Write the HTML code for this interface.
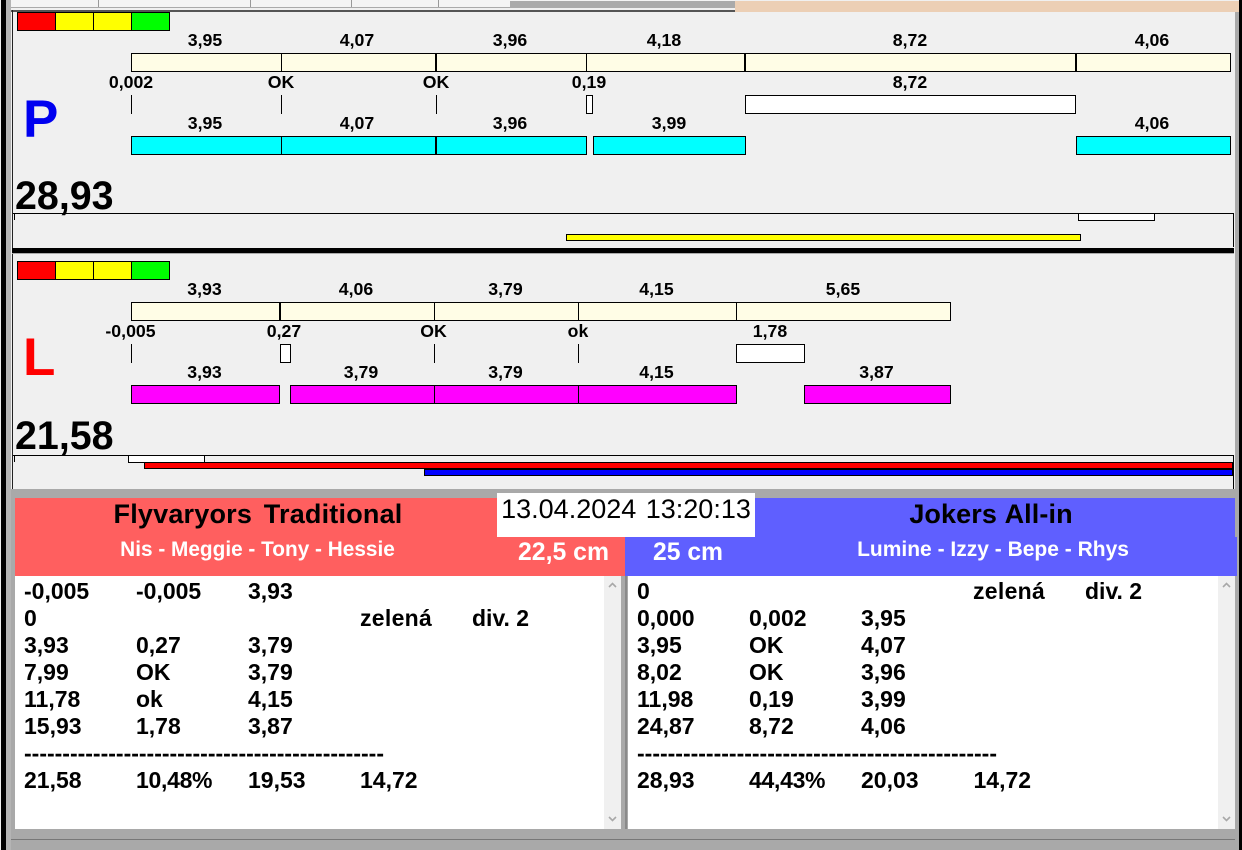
<!DOCTYPE html>
<html><head><meta charset="utf-8"><style>
html,body{margin:0;padding:0;background:#f0f0f0}
body{position:relative;width:1242px;height:850px;overflow:hidden;font-family:"Liberation Sans",sans-serif;color:#000}
div,span{position:absolute;box-sizing:border-box}
.r{border:1.5px solid #000}
.v{background:#000;width:1px}
.l{width:100px;height:20px;line-height:20px;text-align:center;font-weight:bold;font-size:17.7px;white-space:nowrap}
.t{font-weight:bold;font-size:23px;line-height:26px;height:26px;white-space:nowrap}
.cy{background:#0ff}.mg{background:#f0f}.ye{background:#fffde6}.w{background:#fff}
</style></head><body>
<!-- frame -->
<div style="left:1px;top:0;width:5px;height:850px;background:#000"></div>
<div style="left:6px;top:0;width:5px;height:850px;background:#b4b4b4"></div>
<div style="left:1239px;top:0;width:3px;height:850px;background:#000"></div>
<div style="left:1235px;top:12px;width:4px;height:838px;background:#a9a9a9"></div>
<!-- top strip -->
<div style="left:11px;top:0;width:724px;height:8px;background:#f4f4f4"></div>
<div style="left:510px;top:1px;width:225px;height:6px;background:#aaa"></div>
<div style="left:98px;top:0;width:1px;height:7px;background:#999"></div>
<div style="left:250px;top:0;width:1px;height:7px;background:#999"></div>
<div style="left:351px;top:0;width:1px;height:7px;background:#999"></div>
<div style="left:438px;top:0;width:1px;height:7px;background:#999"></div>
<div style="left:11px;top:7px;width:724px;height:1px;background:#aaa"></div>
<div style="left:11px;top:10px;width:724px;height:2px;background:#555"></div>
<div style="left:735px;top:1px;width:504px;height:11px;background:#eccfb5"></div>
<div style="left:12px;top:10px;width:1px;height:480px;background:#222"></div>

<!-- P panel -->
<div style="left:17px;top:12px;width:39px;height:19px;background:#f00;border:1px solid #000"></div>
<div style="left:55px;top:12px;width:39px;height:19px;background:#ff0;border:1px solid #000"></div>
<div style="left:93px;top:12px;width:39px;height:19px;background:#ff0;border:1px solid #000"></div>
<div style="left:131px;top:12px;width:39px;height:19px;background:#0f0;border:1px solid #000"></div>

<div class="l" style="left:155px;top:30px">3,95</div>
<div class="l" style="left:307px;top:30px">4,07</div>
<div class="l" style="left:460px;top:30px">3,96</div>
<div class="l" style="left:614px;top:30px">4,18</div>
<div class="l" style="left:860px;top:30px">8,72</div>
<div class="l" style="left:1102px;top:30px">4,06</div>

<div class="r ye" style="left:131px;top:53px;width:1100px;height:19px;border-width:1px"></div>
<div class="v" style="left:281px;top:53px;height:19px"></div>
<div class="v" style="left:435px;top:53px;height:19px;width:2px"></div>
<div class="v" style="left:586px;top:53px;height:19px"></div>
<div class="v" style="left:744px;top:53px;height:19px;width:2px"></div>
<div class="v" style="left:1075px;top:53px;height:19px;width:2px"></div>

<div class="l" style="left:81px;top:72px">0,002</div>
<div class="l" style="left:231px;top:72px">OK</div>
<div class="l" style="left:386px;top:72px">OK</div>
<div class="l" style="left:539px;top:72px">0,19</div>
<div class="l" style="left:860px;top:72px">8,72</div>

<div class="v" style="left:131px;top:95px;height:19px"></div>
<div class="v" style="left:281px;top:95px;height:19px"></div>
<div class="v" style="left:436px;top:95px;height:19px"></div>
<div class="w" style="left:586px;top:95px;width:7px;height:19px;border:1px solid #000"></div>
<div class="w" style="left:745px;top:95px;width:331px;height:19px;border:1px solid #000"></div>

<div class="l" style="left:155px;top:113px">3,95</div>
<div class="l" style="left:307px;top:113px">4,07</div>
<div class="l" style="left:460px;top:113px">3,96</div>
<div class="l" style="left:619px;top:113px">3,99</div>
<div class="l" style="left:1102px;top:113px">4,06</div>

<div class="cy" style="left:131px;top:136px;width:456px;height:19px;border:1px solid #000"></div>
<div class="v" style="left:281px;top:136px;height:19px"></div>
<div class="v" style="left:435px;top:136px;height:19px;width:2px"></div>
<div class="cy" style="left:593px;top:136px;width:153px;height:19px;border:1px solid #000"></div>
<div class="cy" style="left:1076px;top:136px;width:155px;height:19px;border:1px solid #000"></div>

<div style="left:23px;top:90px;font-size:53px;line-height:60px;font-weight:bold;color:#0000f0">P</div>
<div style="left:15px;top:173px;font-size:39.4px;line-height:46px;font-weight:bold">28,93</div>

<div style="left:13px;top:213px;width:1221px;height:1px;background:#000"></div>
<div class="v" style="left:14px;top:214px;height:6px"></div>
<div class="v" style="left:1233px;top:213px;height:34px"></div>
<div class="w" style="left:1078px;top:213px;width:77px;height:8px;border:1px solid #000"></div>
<div style="left:566px;top:234px;width:515px;height:7px;background:#ff0;border:1px solid #000"></div>
<div style="left:12px;top:248px;width:1222px;height:5px;background:#000"></div>
<div style="left:12px;top:253px;width:1222px;height:1px;background:#aaa"></div>

<!-- L panel -->
<div style="left:17px;top:261px;width:39px;height:19px;background:#f00;border:1px solid #000"></div>
<div style="left:55px;top:261px;width:39px;height:19px;background:#ff0;border:1px solid #000"></div>
<div style="left:93px;top:261px;width:39px;height:19px;background:#ff0;border:1px solid #000"></div>
<div style="left:131px;top:261px;width:39px;height:19px;background:#0f0;border:1px solid #000"></div>

<div class="l" style="left:154.500px;top:279px">3,93</div>
<div class="l" style="left:306px;top:279px">4,06</div>
<div class="l" style="left:455.500px;top:279px">3,79</div>
<div class="l" style="left:606.500px;top:279px">4,15</div>
<div class="l" style="left:793px;top:279px">5,65</div>

<div class="r ye" style="left:131px;top:302px;width:820px;height:19px;border-width:1px"></div>
<div class="v" style="left:279px;top:302px;height:19px;width:2px"></div>
<div class="v" style="left:434px;top:302px;height:19px"></div>
<div class="v" style="left:578px;top:302px;height:19px"></div>
<div class="v" style="left:736px;top:302px;height:19px"></div>

<div class="l" style="left:80.500px;top:321px">-0,005</div>
<div class="l" style="left:234px;top:321px">0,27</div>
<div class="l" style="left:383.500px;top:321px">OK</div>
<div class="l" style="left:528px;top:321px">ok</div>
<div class="l" style="left:720px;top:321px">1,78</div>

<div class="v" style="left:131px;top:344px;height:19px"></div>
<div class="w" style="left:280px;top:344px;width:11px;height:19px;border:1px solid #000"></div>
<div class="v" style="left:434px;top:344px;height:19px"></div>
<div class="v" style="left:578px;top:344px;height:19px"></div>
<div class="w" style="left:736px;top:344px;width:69px;height:19px;border:1px solid #000"></div>

<div class="l" style="left:154.500px;top:362px">3,93</div>
<div class="l" style="left:311px;top:362px">3,79</div>
<div class="l" style="left:455.500px;top:362px">3,79</div>
<div class="l" style="left:606.500px;top:362px">4,15</div>
<div class="l" style="left:826.500px;top:362px">3,87</div>

<div class="mg" style="left:131px;top:385px;width:149px;height:19px;border:1px solid #000"></div>
<div class="mg" style="left:290px;top:385px;width:447px;height:19px;border:1px solid #000"></div>
<div class="v" style="left:434px;top:385px;height:19px"></div>
<div class="v" style="left:578px;top:385px;height:19px"></div>
<div class="mg" style="left:804px;top:385px;width:147px;height:19px;border:1px solid #000"></div>

<div style="left:23px;top:328px;font-size:53px;line-height:60px;font-weight:bold;color:#f00">L</div>
<div style="left:15px;top:413px;font-size:39.4px;line-height:46px;font-weight:bold">21,58</div>

<div style="left:13px;top:455px;width:1221px;height:1px;background:#000"></div>
<div class="v" style="left:14px;top:456px;height:6px"></div>
<div class="v" style="left:1233px;top:455px;height:34px"></div>
<div class="w" style="left:128px;top:455px;width:77px;height:8px;border:1px solid #000"></div>
<div style="left:144px;top:462px;width:1089px;height:7px;background:#f00;border:1px solid #000"></div>
<div style="left:424px;top:469px;width:809px;height:7px;background:#00f;border:1px solid #000"></div>

<!-- lower section -->
<div style="left:11px;top:489px;width:1224px;height:9px;background:#a9a9a9"></div>
<div style="left:11px;top:498px;width:4px;height:352px;background:#a9a9a9"></div>
<div style="left:15px;top:498px;width:610px;height:78px;background:#ff5f5f"></div>
<div style="left:625px;top:498px;width:610px;height:39px;background:#5f5fff"></div>
<div style="left:625px;top:537px;width:612px;height:39px;background:#5f5fff"></div>
<div style="left:497px;top:493px;width:258px;height:44px;background:#fff"></div>
<div style="left:497px;top:493px;width:258px;height:32px;line-height:32px;text-align:center;font-size:27px;word-spacing:2px;white-space:nowrap">13.04.2024 13:20:13</div>

<div style="left:15px;top:498px;width:486px;height:32px;line-height:32px;text-align:center;font-size:27px;font-weight:bold;letter-spacing:.2px;word-spacing:4px;white-space:nowrap">Flyvaryors Traditional</div>
<div style="left:15px;top:538px;width:485px;height:24px;line-height:24px;text-align:center;font-size:20.800px;font-weight:bold;color:#fff;white-space:nowrap">Nis - Meggie - Tony - Hessie</div>
<div style="left:518px;top:538px;font-size:24.800px;line-height:30px;font-weight:bold;color:#fff;white-space:nowrap">22,5 cm</div>
<div style="left:653px;top:538px;font-size:24.700px;line-height:30px;font-weight:bold;color:#fff;white-space:nowrap">25 cm</div>
<div style="left:755px;top:498px;width:472px;height:32px;line-height:32px;text-align:center;font-size:27px;font-weight:bold;letter-spacing:.1px;word-spacing:1px;white-space:nowrap">Jokers All-in</div>
<div style="left:755px;top:538px;width:476px;height:24px;line-height:24px;text-align:center;font-size:21px;font-weight:bold;color:#fff;white-space:nowrap">Lumine - Izzy - Bepe - Rhys</div>

<!-- lists -->
<div class="w" style="left:15px;top:576px;width:606px;height:253px"></div>
<div style="left:604px;top:576px;width:17px;height:253px;background:#f0f0f0"></div>
<div style="left:621px;top:576px;width:7px;height:253px;background:#a9a9a9"></div>
<div style="left:625px;top:576px;width:2px;height:253px;background:#8a8a8a"></div>
<div class="w" style="left:628px;top:576px;width:607px;height:253px"></div>
<div style="left:1218px;top:576px;width:17px;height:253px;background:#f0f0f0"></div>
<div style="left:11px;top:829px;width:1224px;height:21px;background:#a9a9a9"></div>
<div style="left:11px;top:839px;width:1224px;height:1px;background:#777"></div>

<svg style="position:absolute;left:0;top:0" width="1242" height="850" fill="none" stroke="#a8a8a8" stroke-width="1.6">
<path d="M609 587l3.500-3.500 3.500 3.500M609 817l3.500 3.500 3.500-3.500M1223 587l3.500-3.500 3.500 3.500M1223 817l3.500 3.500 3.500-3.500"/>
</svg>

<div class="t" style="left:24px;top:578px">-0,005</div><div class="t" style="left:136px;top:578px">-0,005</div><div class="t" style="left:248px;top:578px">3,93</div>
<div class="t" style="left:24px;top:605px">0</div><div class="t" style="left:360px;top:605px;letter-spacing:.3px">zelená</div><div class="t" style="left:472px;top:605px">div. 2</div>
<div class="t" style="left:24px;top:632px">3,93</div><div class="t" style="left:136px;top:632px">0,27</div><div class="t" style="left:248px;top:632px">3,79</div>
<div class="t" style="left:24px;top:659px">7,99</div><div class="t" style="left:136px;top:659px">OK</div><div class="t" style="left:248px;top:659px">3,79</div>
<div class="t" style="left:24px;top:686px">11,78</div><div class="t" style="left:136px;top:686px">ok</div><div class="t" style="left:248px;top:686px">4,15</div>
<div class="t" style="left:24px;top:713px">15,93</div><div class="t" style="left:136px;top:713px">1,78</div><div class="t" style="left:248px;top:713px">3,87</div>
<div class="t" style="left:24px;top:740px">-----------------------------------------------</div>
<div class="t" style="left:24px;top:767px">21,58</div><div class="t" style="left:136px;top:767px;letter-spacing:-.3px">10,48%</div><div class="t" style="left:248px;top:767px">19,53</div><div class="t" style="left:360px;top:767px">14,72</div>

<div class="t" style="left:637px;top:578px">0</div><div class="t" style="left:973px;top:578px;letter-spacing:.3px">zelená</div><div class="t" style="left:1085px;top:578px">div. 2</div>
<div class="t" style="left:637px;top:605px">0,000</div><div class="t" style="left:749px;top:605px">0,002</div><div class="t" style="left:861px;top:605px">3,95</div>
<div class="t" style="left:637px;top:632px">3,95</div><div class="t" style="left:749px;top:632px">OK</div><div class="t" style="left:861px;top:632px">4,07</div>
<div class="t" style="left:637px;top:659px">8,02</div><div class="t" style="left:749px;top:659px">OK</div><div class="t" style="left:861px;top:659px">3,96</div>
<div class="t" style="left:637px;top:686px">11,98</div><div class="t" style="left:749px;top:686px">0,19</div><div class="t" style="left:861px;top:686px">3,99</div>
<div class="t" style="left:637px;top:713px">24,87</div><div class="t" style="left:749px;top:713px">8,72</div><div class="t" style="left:861px;top:713px">4,06</div>
<div class="t" style="left:637px;top:740px">-----------------------------------------------</div>
<div class="t" style="left:637px;top:767px">28,93</div><div class="t" style="left:749px;top:767px;letter-spacing:-.3px">44,43%</div><div class="t" style="left:861px;top:767px">20,03</div><div class="t" style="left:973.500px;top:767px">14,72</div>
</body></html>
